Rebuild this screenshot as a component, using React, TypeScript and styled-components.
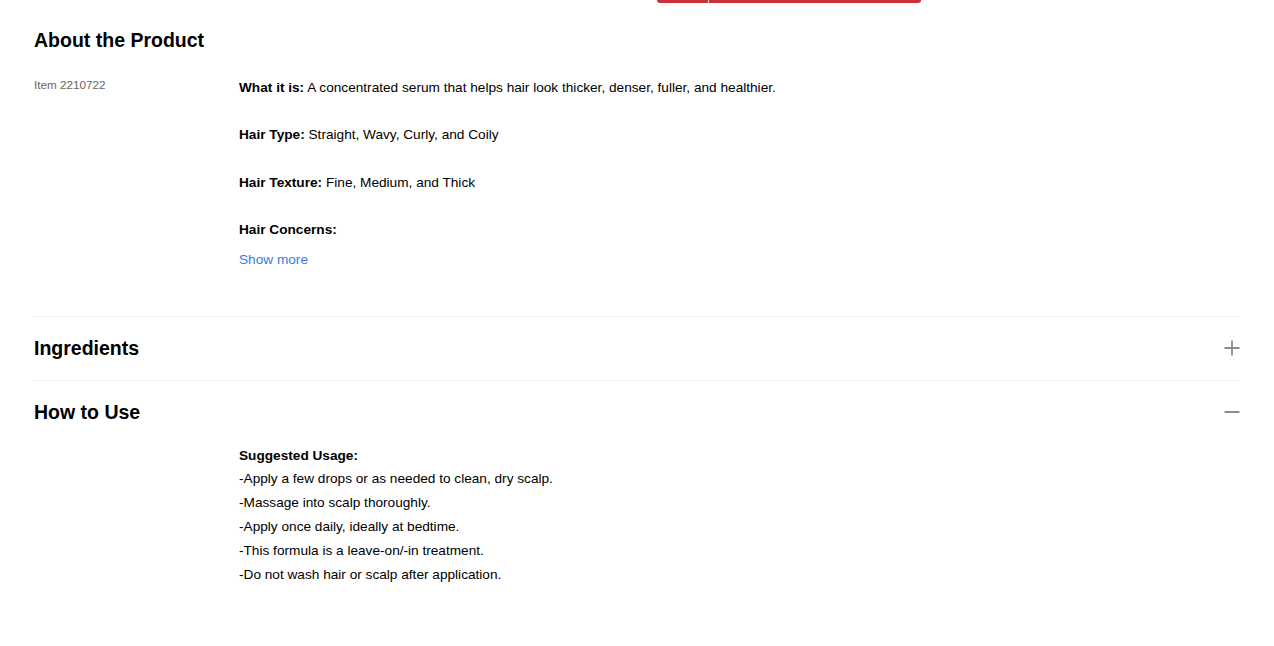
import React, { useState } from "react";
import styled, { createGlobalStyle } from "styled-components";

const Global = createGlobalStyle`
  html, body { margin: 0; padding: 0; background: #fff; }
  body { font-family: "Liberation Sans", Arial, Helvetica, sans-serif; color: #000; -webkit-font-smoothing: antialiased; }
`;

const Page = styled.div`
  width: 1274px;
  min-height: 643px;
  box-sizing: border-box;
  padding: 0 34px;
`;

const TopStrip = styled.div`
  display: flex;
  padding-left: 657px;
  height: 3px;
`;

const CartBar = styled.div`
  display: flex;
  width: 264px;
  height: 3px;
  border-radius: 0 0 6px 6px;
  overflow: hidden;
  background: #cc2f37;
`;

const CartSplit = styled.div`
  width: 51px;
  border-right: 1px solid #f3d0d2;
`;

const MainTitle = styled.h2`
  margin: 0;
  padding-top: 23px;
  font-size: 19.5px;
  line-height: 28px;
  font-weight: 700;
`;

const DetailGrid = styled.div`
  display: grid;
  grid-template-columns: 205px 1fr;
  padding-top: 19px;
  padding-bottom: 44px;
`;

const ItemNo = styled.div`
  font-size: 11.7px;
  line-height: 24px;
  color: #666;
`;

const Specs = styled.div`
  display: flex;
  flex-direction: column;
  gap: 23.8px;
  font-size: 13.65px;
  line-height: 23.5px;
  padding-top: 3px;
`;

const Spec = styled.p`
  margin: 0;
`;

const Label = styled.strong`
  font-weight: 700;
`;

const MoreLink = styled.a`
  display: block;
  margin-top: -17px;
  color: #3a7be2;
  text-decoration: none;
  font-size: 13.65px;
  line-height: 23.5px;
  cursor: pointer;
`;

const Section = styled.section`
  border-top: 1px solid #f0f0f0;
`;

const SectionHead = styled.button`
  display: flex;
  align-items: center;
  justify-content: space-between;
  width: 100%;
  height: 63px;
  padding: 0;
  border: 0;
  background: none;
  font-family: inherit;
  font-size: 19.5px;
  font-weight: 700;
  color: #000;
  cursor: pointer;
  text-align: left;
`;

const Toggle = styled.svg`
  width: 16px;
  height: 16px;
`;

const UsageBody = styled.div`
  padding-left: 205px;
  font-size: 13.65px;
  line-height: 23.8px;
`;

const UsageLine = styled.div``;

const PlusIcon = () => (
  <Toggle viewBox="0 0 16 16">
    <path d="M8 0.5V15.5M0.5 8H15.5" stroke="#8a8a8a" strokeWidth="1.8" fill="none" />
  </Toggle>
);

const MinusIcon = () => (
  <Toggle viewBox="0 0 16 16">
    <path d="M0.5 8H15.5" stroke="#8a8a8a" strokeWidth="2" fill="none" />
  </Toggle>
);

export default function App() {
  const [ingOpen, setIngOpen] = useState(false);
  const [useOpen, setUseOpen] = useState(true);
  return (
    <>
      <Global />
      <TopStrip>
        <CartBar>
          <CartSplit />
        </CartBar>
      </TopStrip>
      <Page>
        <MainTitle>About the Product</MainTitle>
        <DetailGrid>
          <ItemNo>Item 2210722</ItemNo>
          <Specs>
            <Spec>
              <Label>What it is:</Label> A concentrated serum that helps hair look thicker, denser, fuller, and healthier.
            </Spec>
            <Spec>
              <Label>Hair Type:</Label> Straight, Wavy, Curly, and Coily
            </Spec>
            <Spec>
              <Label>Hair Texture:</Label> Fine, Medium, and Thick
            </Spec>
            <Spec>
              <Label>Hair Concerns:</Label>
            </Spec>
            <MoreLink>Show more</MoreLink>
          </Specs>
        </DetailGrid>
        <Section>
          <SectionHead onClick={() => setIngOpen(!ingOpen)}>
            Ingredients
            {ingOpen ? <MinusIcon /> : <PlusIcon />}
          </SectionHead>
        </Section>
        <Section>
          <SectionHead onClick={() => setUseOpen(!useOpen)}>
            How to Use
            {useOpen ? <MinusIcon /> : <PlusIcon />}
          </SectionHead>
          {useOpen && (
            <UsageBody>
              <Label>Suggested Usage:</Label>
              <UsageLine>-Apply a few drops or as needed to clean, dry scalp.</UsageLine>
              <UsageLine>-Massage into scalp thoroughly.</UsageLine>
              <UsageLine>-Apply once daily, ideally at bedtime.</UsageLine>
              <UsageLine>-This formula is a leave-on/-in treatment.</UsageLine>
              <UsageLine>-Do not wash hair or scalp after application.</UsageLine>
            </UsageBody>
          )}
        </Section>
      </Page>
    </>
  );
}
